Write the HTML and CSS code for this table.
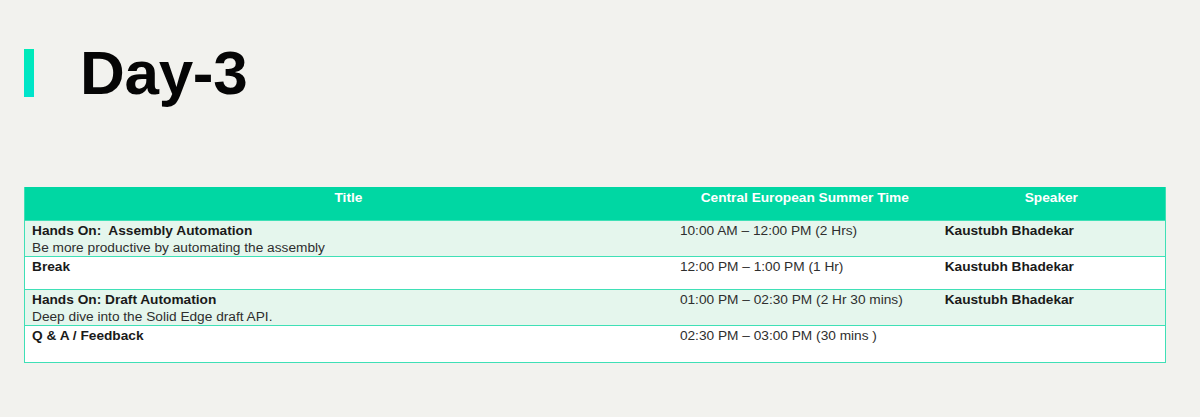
FILE: index.html
```html
<!DOCTYPE html>
<html>
<head>
<meta charset="utf-8">
<link rel="stylesheet" href="styles.css">
</head>
<body>
<div class="page">
  <div class="heading">
    <div class="accent"></div>
    <h1 class="title">Day-3</h1>
  </div>
  <table class="agenda">
    <thead>
      <tr>
        <th class="c-title">Title</th>
        <th class="c-time">Central European Summer Time</th>
        <th class="c-speaker">Speaker</th>
      </tr>
    </thead>
    <tbody>
      <tr class="alt r1">
        <td><div class="b">Hands On:&nbsp; Assembly Automation</div><div class="sub">Be more productive by automating the assembly</div></td>
        <td class="time">10:00 AM – 12:00 PM (2 Hrs)</td>
        <td class="b">Kaustubh Bhadekar</td>
      </tr>
      <tr class="r2">
        <td><div class="b">Break</div></td>
        <td class="time">12:00 PM – 1:00 PM (1 Hr)</td>
        <td class="b">Kaustubh Bhadekar</td>
      </tr>
      <tr class="alt r3">
        <td><div class="b">Hands On: Draft Automation</div><div class="sub">Deep dive into the Solid Edge draft API.</div></td>
        <td class="time">01:00 PM – 02:30 PM (2 Hr 30 mins)</td>
        <td class="b">Kaustubh Bhadekar</td>
      </tr>
      <tr class="r4">
        <td><div class="b">Q &amp; A / Feedback</div></td>
        <td class="time">02:30 PM – 03:00 PM (30 mins )</td>
        <td></td>
      </tr>
    </tbody>
  </table>
</div>
</body>
</html>
```
FILE: styles.css
```css
html, body {
  margin: 0;
  padding: 0;
  background: #f2f2ee;
}
body {
  width: 1200px;
  height: 417px;
  overflow: hidden;
  font-family: "Liberation Sans", Arial, sans-serif;
}
.page {
  padding: 49px 34px 0 24px;
}
.heading {
  display: flex;
  align-items: center;
  height: 48px;
}
.accent {
  width: 10px;
  height: 48px;
  background: linear-gradient(180deg, #00eab8 0%, #00e4cc 100%);
}
.title {
  margin: 0 0 0 46px;
  font-size: 62px;
  font-weight: bold;
  line-height: 48px;
  color: #050505;
  letter-spacing: -0.3px;
}
.agenda {
  margin-top: 90px;
  width: 1142px;
  border-collapse: collapse;
  font-size: 13.7px;
  color: #1a1a1a;
  border-left: 1px solid #3fe0b6;
  border-right: 1px solid #3fe0b6;
}
.agenda th {
  background: #00d7a3;
  color: #ffffff;
  font-weight: bold;
  text-align: center;
  vertical-align: top;
  height: 33px;
  padding: 3px 0 0;
  line-height: 16px;
  box-sizing: border-box;
  border-bottom: 1px solid #3fe0b6;
}
.c-title { width: 648px; }
.c-time { width: 266px; }
.c-speaker { width: 228px; }
.agenda td {
  vertical-align: top;
  padding: 1px 7px 0 7px;
  line-height: 17px;
  border-bottom: 1px solid #3fe0b6;
  box-sizing: border-box;
}
.agenda td.time {
  padding-left: 8px;
  color: #2e2e2e;
}
.sub { line-height: 17px; color: #2e2e2e; }
.alt { background: #e5f6ed; }
.r2, .r4 { background: #ffffff; }
.r1 td { height: 35px; }
.r2 td { height: 33px; }
.r3 td { height: 36px; }
.r4 td { height: 37px; }
.b { font-weight: bold; }
```
